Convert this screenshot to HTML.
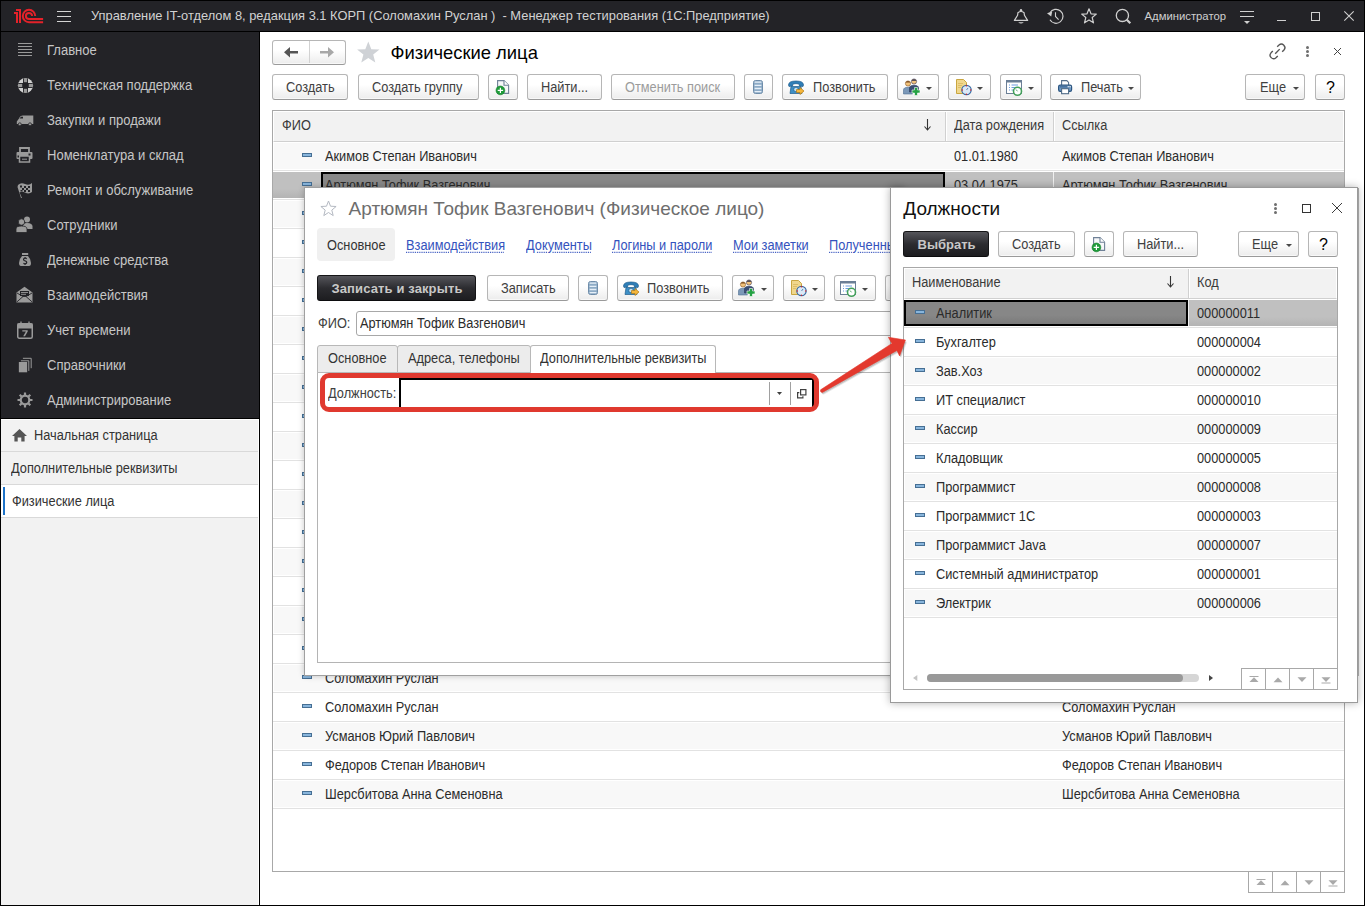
<!DOCTYPE html><html><head><meta charset="utf-8"><style>
*{box-sizing:border-box;margin:0;padding:0}
html,body{width:1365px;height:906px;overflow:hidden}
body{position:relative;font-family:"Liberation Sans",sans-serif;font-size:13px;background:#fff;color:#333}
.a{position:absolute}
.t{position:absolute;white-space:pre}
.btn{position:absolute;height:26px;border:1px solid #b6b6b6;border-bottom-color:#9a9a9a;border-radius:3px;background:linear-gradient(#fff 0%,#fff 40%,#ececec 100%);box-shadow:inset 0 -1px 0 #f8f8f8}
.bdk{position:absolute;height:26px;border:1px solid #151517;border-bottom-color:#0c0c0e;border-radius:3px;background:linear-gradient(#55555a 0%,#2c2c30 50%,#1d1d20 100%)}
.dash{position:absolute;width:10px;height:4px;background:#88b5dc;border:1px solid #466f94}
svg{position:absolute;overflow:visible}
</style></head><body>
<div class="a" style="left:0px;top:0px;width:1365px;height:31px;background:#232327"></div>
<div class="a" style="left:0px;top:31px;width:1365px;height:1px;background:#000"></div>
<svg style="left:0px;top:0px" width="60" height="31" viewBox="0 0 60 31"><g fill="#e4222a"><rect x="16" y="9" width="5" height="2"/><rect x="19" y="9" width="2" height="14"/><rect x="14" y="12" width="4" height="2"/><rect x="16" y="12" width="2" height="11"/></g><g fill="none" stroke="#e4222a" stroke-width="2"><path d="M35.2 16 A6.2 6.2 0 1 0 29 22.2 H43.1"/><path d="M32.1 16 A3.1 3.1 0 1 0 29 19.1 H43.1"/></g></svg>
<div class="a" style="left:57px;top:11px;width:14px;height:1px;background:#d4d4d4"></div>
<div class="a" style="left:57px;top:16px;width:14px;height:1px;background:#d4d4d4"></div>
<div class="a" style="left:57px;top:21px;width:14px;height:1px;background:#d4d4d4"></div>
<div class="t" style="left:91px;top:6.79px;font-size:13.6px;line-height:18px;transform:scaleX(0.9465);transform-origin:0 0;color:#d2d2d2">Управление IT-отделом 8, редакция 3.1 КОРП (Соломахин Руслан )  - Менеджер тестирования (1С:Предприятие)</div>
<svg style="left:1012px;top:7px" width="18" height="19" viewBox="0 0 18 19"><path d="M2.4 13.4 L5.6 8.2 L5.9 5.8 Q9 3.2 12.1 5.8 L12.4 8.2 L15.6 13.4 Z" fill="none" stroke="#d0d0d0" stroke-width="1.2" stroke-linejoin="round"/><circle cx="9" cy="3.2" r="1.2" fill="#d0d0d0"/><path d="M6.2 15.2 H11.8 Q9 18 6.2 15.2Z" fill="#d0d0d0"/></svg>
<svg style="left:1046px;top:8px" width="18" height="18" viewBox="0 0 18 18"><path d="M3.94 11.8 A7 7 0 1 0 3.94 4.8" fill="none" stroke="#d0d0d0" stroke-width="1.2"/><path d="M1 5.2 L6.2 3.4 L5.2 8.4Z" fill="#d0d0d0"/><path d="M9.5 4.3 V8.5 L12.6 11.7" fill="none" stroke="#d0d0d0" stroke-width="1.1"/></svg>
<svg style="left:1080px;top:7px" width="18" height="18" viewBox="0 0 18 18"><path d="M9 1.8 L11 6.8 L16.3 7.1 L12.2 10.5 L13.5 15.8 L9 12.9 L4.5 15.8 L5.8 10.5 L1.7 7.1 L7 6.8 Z" fill="none" stroke="#d0d0d0" stroke-width="1.2" stroke-linejoin="round"/></svg>
<svg style="left:1114px;top:7px" width="19" height="19" viewBox="0 0 19 19"><circle cx="8.4" cy="8.4" r="6.1" fill="none" stroke="#d0d0d0" stroke-width="1.3"/><path d="M12.8 12.8 L16.3 16.3" stroke="#d0d0d0" stroke-width="2.2"/></svg>
<div class="t" style="left:1144.5px;top:8.58px;font-size:11.3px;line-height:15px;color:#cfcfcf">Администратор</div>
<div class="a" style="left:1240px;top:11px;width:14px;height:1px;background:#d0d0d0"></div>
<div class="a" style="left:1240px;top:16px;width:14px;height:1px;background:#d0d0d0"></div>
<svg style="left:1244px;top:21px" width="6" height="3" viewBox="0 0 6 3"><path d="M0 0H6L3 3Z" fill="#d0d0d0"/></svg>
<div class="a" style="left:1277px;top:20px;width:9px;height:1.2px;background:#d0d0d0"></div>
<div class="a" style="left:1311px;top:12px;width:9px;height:9px;border:1.3px solid #d0d0d0"></div>
<svg style="left:1344px;top:11px" width="10" height="10" viewBox="0 0 10 10"><path d="M0.3 0.3L9.7 9.7M9.7 0.3L0.3 9.7" stroke="#d0d0d0" stroke-width="1.1"/></svg>
<div class="a" style="left:0px;top:32px;width:259px;height:386px;background:#232327"></div>
<div class="a" style="left:259px;top:32px;width:1px;height:874px;background:#000"></div>
<div class="a" style="left:0px;top:418px;width:259px;height:1px;background:#000"></div>
<div class="a" style="left:0px;top:419px;width:259px;height:487px;background:#f2f2f2;border-top:1px solid #fff;border-right:1px solid #fff"></div>
<div class="t" style="left:47px;top:41.00px;font-size:14px;line-height:18px;transform:scaleX(0.93);transform-origin:0 0;color:#c6c6c6">Главное</div>
<div class="t" style="left:47px;top:76.00px;font-size:14px;line-height:18px;transform:scaleX(0.93);transform-origin:0 0;color:#c6c6c6">Техническая поддержка</div>
<div class="t" style="left:47px;top:111.00px;font-size:14px;line-height:18px;transform:scaleX(0.93);transform-origin:0 0;color:#c6c6c6">Закупки и продажи</div>
<div class="t" style="left:47px;top:146.00px;font-size:14px;line-height:18px;transform:scaleX(0.93);transform-origin:0 0;color:#c6c6c6">Номенклатура и склад</div>
<div class="t" style="left:47px;top:181.00px;font-size:14px;line-height:18px;transform:scaleX(0.93);transform-origin:0 0;color:#c6c6c6">Ремонт и обслуживание</div>
<div class="t" style="left:47px;top:216.00px;font-size:14px;line-height:18px;transform:scaleX(0.93);transform-origin:0 0;color:#c6c6c6">Сотрудники</div>
<div class="t" style="left:47px;top:251.00px;font-size:14px;line-height:18px;transform:scaleX(0.93);transform-origin:0 0;color:#c6c6c6">Денежные средства</div>
<div class="t" style="left:47px;top:286.00px;font-size:14px;line-height:18px;transform:scaleX(0.93);transform-origin:0 0;color:#c6c6c6">Взаимодействия</div>
<div class="t" style="left:47px;top:321.00px;font-size:14px;line-height:18px;transform:scaleX(0.93);transform-origin:0 0;color:#c6c6c6">Учет времени</div>
<div class="t" style="left:47px;top:356.00px;font-size:14px;line-height:18px;transform:scaleX(0.93);transform-origin:0 0;color:#c6c6c6">Справочники</div>
<div class="t" style="left:47px;top:391.00px;font-size:14px;line-height:18px;transform:scaleX(0.93);transform-origin:0 0;color:#c6c6c6">Администрирование</div>
<div class="a" style="left:18px;top:43px;width:14px;height:1px;background:#9a9a9a"></div>
<div class="a" style="left:18px;top:46px;width:14px;height:1px;background:#9a9a9a"></div>
<div class="a" style="left:18px;top:49px;width:14px;height:1px;background:#9a9a9a"></div>
<div class="a" style="left:18px;top:52px;width:14px;height:1px;background:#9a9a9a"></div>
<div class="a" style="left:18px;top:55px;width:14px;height:1px;background:#9a9a9a"></div>
<svg style="left:17px;top:77px" width="17" height="17" viewBox="0 0 17 17"><clipPath id="lbc"><circle cx="8.5" cy="8.5" r="7.6"/></clipPath><g clip-path="url(#lbc)"><rect width="17" height="17" fill="#d2d2d2"/><rect x="6" y="0" width="5" height="17" fill="#232327"/><rect x="0" y="6" width="17" height="5" fill="#232327"/><rect x="6.9" y="0" width="3.2" height="5.2" fill="#9a9a9a"/><rect x="6.9" y="11.8" width="3.2" height="5.2" fill="#9a9a9a"/><rect x="0" y="6.9" width="5.2" height="3.2" fill="#9a9a9a"/><rect x="11.8" y="6.9" width="5.2" height="3.2" fill="#9a9a9a"/></g></svg>
<svg style="left:16px;top:114px" width="18" height="12" viewBox="0 0 18 12"><path d="M0.8 7.5 L3 4.5 Q4 1.5 7 1.5 H17.3 V10 H0.8Z" fill="#9a9a9a"/><path d="M3.5 4.5 L5 2.8 H7 V4.5Z" fill="#232327"/><circle cx="3.8" cy="10.3" r="1.5" fill="#9a9a9a" stroke="#232327" stroke-width="0.8"/><circle cx="14" cy="10.3" r="1.5" fill="#9a9a9a" stroke="#232327" stroke-width="0.8"/></svg>
<svg style="left:16px;top:147px" width="17" height="16" viewBox="0 0 17 16"><path d="M4 5.5V1H13V5.5" fill="none" stroke="#9a9a9a" stroke-width="1.8"/><rect x="0.5" y="5" width="16" height="7" rx="1" fill="#9a9a9a"/><rect x="3.5" y="9" width="10" height="6" fill="#232327" stroke="#9a9a9a" stroke-width="1.5"/><path d="M6 12.2H11" stroke="#9a9a9a" stroke-width="1"/><rect x="12.5" y="6.5" width="2" height="2" fill="#232327"/><rect x="1.5" y="8.5" width="1.5" height="2" fill="#232327"/></svg>
<svg style="left:17px;top:182px" width="16" height="16" viewBox="0 0 16 16"><path d="M1 3 Q4 0 8 2 Q12 4 15 1 V10 Q12 12.5 8 10.5 Q5 9 2.5 10.5 L5 16 L4 16 L0.5 5Z" fill="#9a9a9a"/><g fill="#232327"><rect x="3" y="3.5" width="2" height="2"/><rect x="7" y="4" width="2" height="2"/><rect x="11" y="4" width="2" height="2"/><rect x="5" y="6" width="2" height="2"/><rect x="9" y="6" width="2" height="2"/><rect x="3.5" y="8" width="2" height="1.5"/><rect x="7" y="8" width="2" height="2"/><rect x="11" y="8" width="2" height="2"/></g></svg>
<svg style="left:16px;top:216px" width="17" height="17" viewBox="0 0 17 17"><circle cx="11" cy="3.5" r="3" fill="#9a9a9a"/><path d="M7 12 V9.5 Q7 7 11 7 Q16.5 7 16.5 10.5 V13 H9Z" fill="#9a9a9a"/><circle cx="5.5" cy="6" r="3.2" fill="#9a9a9a" stroke="#232327" stroke-width="0.8"/><path d="M0 16.5 V13 Q0 10 5.5 10 Q11 10 11 13 V16.5Z" fill="#9a9a9a" stroke="#232327" stroke-width="0.8"/></svg>
<svg style="left:18px;top:252px" width="14" height="15" viewBox="0 0 14 15"><rect x="4" y="1" width="6.2" height="2" fill="#9a9a9a"/><path d="M4 4H10Q13 7 13 11Q13 14 11 14H3Q1 14 1 11Q1 7 4 4Z" fill="#9a9a9a"/><path d="M8.8 6.6Q7.2 5.8 5.9 6.6Q5 7.6 6.3 8.5L7.9 9.3Q9.2 10.2 8.4 11.3Q7.2 12.2 5.4 11.4M7.1 5V5.9M7.1 12.1V13" fill="none" stroke="#232327" stroke-width="1.2"/></svg>
<svg style="left:16px;top:286px" width="17" height="17" viewBox="0 0 17 17"><path d="M0.5 6.5 L8.5 0.8 L16.5 6.5 V16.5 H0.5Z" fill="#9a9a9a"/><rect x="4" y="5" width="9" height="5" fill="#232327"/><path d="M5 6.5H12M5 8.3H10" stroke="#9a9a9a" stroke-width="0.9"/><path d="M1 15.8 L7 10.5 H10 L16 15.8 M1 7 L7 10.5 M16 7 L10 10.5" fill="none" stroke="#232327" stroke-width="0.9"/></svg>
<svg style="left:16px;top:321px" width="18" height="18" viewBox="0 0 18 18"><rect x="1.75" y="2.75" width="14.5" height="14.5" rx="1.5" fill="none" stroke="#9a9a9a" stroke-width="1.5"/><rect x="1.5" y="2.5" width="15" height="5" fill="#9a9a9a"/><path d="M5 0.5V3.5M13 0.5V3.5" stroke="#9a9a9a" stroke-width="1.3"/><path d="M6.3 9.2H11.7V10.5L9 15.2H7.2L9.9 10.5H6.3Z" fill="#9a9a9a"/></svg>
<svg style="left:18px;top:357px" width="14" height="16" viewBox="0 0 14 16"><rect x="0.85" y="5" width="8.3" height="10.3" fill="#9a9a9a"/><path d="M2.9 3.8H10.8V13.9M4.9 1.3H13.2V11.2" fill="none" stroke="#9a9a9a" stroke-width="1"/></svg>
<svg style="left:17px;top:392px" width="16" height="16" viewBox="0 0 16 16"><circle cx="8" cy="8" r="4.3" fill="none" stroke="#9a9a9a" stroke-width="2.2"/><g stroke="#9a9a9a" stroke-width="2.2"><path d="M8 0.5V3.5M8 12.5V15.5M0.5 8H3.5M12.5 8H15.5M2.7 2.7L4.8 4.8M11.2 11.2L13.3 13.3M13.3 2.7L11.2 4.8M4.8 11.2L2.7 13.3"/></g></svg>
<svg style="left:12px;top:429px" width="16" height="13" viewBox="0 0 16 13"><path d="M7.5 0 L15 7 H12.6 V12.5 H9.3 V8.5 H5.7 V12.5 H2.4 V7 H0 Z" fill="#555"/></svg>
<div class="t" style="left:34px;top:426.00px;font-size:14px;line-height:18px;transform:scaleX(0.913);transform-origin:0 0;color:#333">Начальная страница</div>
<div class="a" style="left:1px;top:451px;width:257px;height:1px;background:#d9d9d9"></div>
<div class="t" style="left:11px;top:459.00px;font-size:14px;line-height:18px;transform:scaleX(0.913);transform-origin:0 0;color:#333">Дополнительные реквизиты</div>
<div class="a" style="left:1px;top:484px;width:257px;height:1px;background:#d9d9d9"></div>
<div class="a" style="left:1px;top:485px;width:257px;height:33px;background:#fff"></div>
<div class="a" style="left:3px;top:487px;width:2px;height:28px;background:#1e73c8"></div>
<div class="t" style="left:12px;top:492.00px;font-size:14px;line-height:18px;transform:scaleX(0.913);transform-origin:0 0;color:#333">Физические лица</div>
<div class="a" style="left:1px;top:517px;width:257px;height:1px;background:#d9d9d9"></div>
<div class="btn" style="left:272px;top:40px;width:74px;height:25px"></div>
<div class="a" style="left:309px;top:41px;width:1px;height:22px;background:#d2d2d2"></div>
<svg style="left:284px;top:47px" width="14" height="11" viewBox="0 0 14 11"><path d="M0 5.3 L6 0 V4 H14 V6.6 H6 V10.6Z" fill="#555"/></svg>
<svg style="left:320px;top:47px" width="14" height="11" viewBox="0 0 14 11"><path d="M14 5.3 L8 0 V4 H0 V6.6 H8 V10.6Z" fill="#a8a8a8"/></svg>
<svg style="left:356px;top:41px" width="25" height="22" viewBox="0 0 25 22"><path d="M12.3 0.5 L15.3 8.2 L23.5 8.5 L17.2 13.6 L19.3 21.5 L12.3 17.1 L5.3 21.5 L7.4 13.6 L1.1 8.5 L9.3 8.2 Z" fill="#cfd2d6"/></svg>
<div class="t" style="left:390.5px;top:40.62px;font-size:18.4px;line-height:24px;color:#000">Физические лица</div>
<svg style="left:1269px;top:43px" width="18" height="17" viewBox="0 0 18 17"><g fill="none" stroke="#555" stroke-width="1.35"><path d="M8.2 3.8 L10.03 2.03 A3.5 3.5 0 0 1 14.97 6.97 L13.2 8.8"/><path d="M8.77 12.97 L6.97 14.77 A3.5 3.5 0 0 1 2.03 9.83 L3.83 8.03"/><path d="M6.2 10.7 L10.7 6.1"/></g></svg>
<svg style="left:1306px;top:46.0px" width="3" height="3" viewBox="0 0 3 3"><circle cx="1.5" cy="1.5" r="1.5" fill="#6e6e6e"/></svg>
<svg style="left:1306px;top:50.0px" width="3" height="3" viewBox="0 0 3 3"><circle cx="1.5" cy="1.5" r="1.5" fill="#6e6e6e"/></svg>
<svg style="left:1306px;top:54.0px" width="3" height="3" viewBox="0 0 3 3"><circle cx="1.5" cy="1.5" r="1.5" fill="#6e6e6e"/></svg>
<svg style="left:1334px;top:48px" width="7" height="7" viewBox="0 0 7 7"><path d="M0 0L7 7M7 0L0 7" stroke="#444" stroke-width="1"/></svg>
<div class="btn" style="left:272px;top:74px;width:76px"></div>
<div class="t" style="left:286px;top:78.00px;font-size:14px;line-height:18px;transform:scaleX(0.913);transform-origin:0 0;color:#404040">Создать</div>
<div class="btn" style="left:358px;top:74px;width:121px"></div>
<div class="t" style="left:372px;top:78.00px;font-size:14px;line-height:18px;transform:scaleX(0.913);transform-origin:0 0;color:#404040">Создать группу</div>
<div class="btn" style="left:488px;top:74px;width:30px"></div>
<svg style="left:495px;top:79px" width="16" height="16" viewBox="0 0 16 16"><path d="M2.6 1.6H9L13.6 6.2V14.4H2.6Z" fill="#f6f7f9" stroke="#6f8197" stroke-width="1.1"/><path d="M9 1.6V6.2H13.6" fill="#fff" stroke="#6f8197" stroke-width="1.1"/><circle cx="5.4" cy="11.4" r="4.4" fill="#1e9b39" stroke="#15802c" stroke-width="0.6"/><path d="M5.4 8.7V14.1M2.7 11.4H8.1" stroke="#fff" stroke-width="1.2"/></svg>
<div class="btn" style="left:527px;top:74px;width:75px"></div>
<div class="t" style="left:541px;top:78.00px;font-size:14px;line-height:18px;transform:scaleX(0.913);transform-origin:0 0;color:#404040">Найти...</div>
<div class="btn" style="left:611px;top:74px;width:124px"></div>
<div class="t" style="left:625px;top:78.00px;font-size:14px;line-height:18px;transform:scaleX(0.913);transform-origin:0 0;color:#9c9c9c">Отменить поиск</div>
<div class="btn" style="left:744px;top:74px;width:29px"></div>
<svg style="left:753px;top:80px" width="10" height="14" viewBox="0 0 10 14"><rect x="0.5" y="0.5" width="9" height="13" rx="2" fill="#8dabc6" stroke="#6f8daa"/><path d="M1.6 2.1H8.4M1.6 5.3H8.4M1.6 8.5H8.4M1.6 11.7H8.4" stroke="#e6eff8" stroke-width="1.3"/></svg>
<div class="btn" style="left:782px;top:74px;width:106px"></div>
<svg style="left:788px;top:80px" width="17" height="15" viewBox="0 0 17 15"><path d="M0.5 5 Q0.5 1 8 1 Q15.5 1 15.5 5 L15 6.5 L11.5 6 L11 4 Q8 3.3 5 4 L4.5 6 L1 6.5Z" fill="#2f7fb8" stroke="#1f5d8c" stroke-width="0.7"/><path d="M3 6.5 L13 6.5 L14 13.5 H2Z" fill="#3d8fc6" stroke="#1f5d8c" stroke-width="0.7"/><circle cx="8" cy="9.5" r="2.3" fill="#bfe0f4" stroke="#1f5d8c" stroke-width="0.7"/><path d="M8.5 9.5 H12 V7.5 L16 11 L12 14.5 V12.5 H8.5Z" fill="#f6b73c" stroke="#b57b12" stroke-width="0.7"/></svg>
<div class="t" style="left:813px;top:78.00px;font-size:14px;line-height:18px;transform:scaleX(0.913);transform-origin:0 0;color:#404040">Позвонить</div>
<div class="btn" style="left:897px;top:74px;width:42px"></div>
<svg style="left:903px;top:78px" width="18" height="17" viewBox="0 0 18 17"><circle cx="5" cy="5.5" r="2.6" fill="#f2c27a" stroke="#8a5a2a" stroke-width="0.6"/><path d="M2.3 4.5 Q5 1.5 7.7 4.5" fill="#7a4a20"/><path d="M0.5 16 V12 Q0.5 9.3 5 9.3 Q9.5 9.3 9.5 12 V16Z" fill="#7b98b8" stroke="#4f6f92" stroke-width="0.6"/><circle cx="11" cy="3.5" r="2.6" fill="#f2c27a" stroke="#3a3a5a" stroke-width="0.6"/><path d="M8.3 2.8 Q11 -0.5 13.7 2.8" fill="#2a2a4a"/><path d="M6.5 14 V10 Q6.5 7.3 11 7.3 Q15.5 7.3 15.5 10 V14Z" fill="#3a4e74" stroke="#2a3a5a" stroke-width="0.6"/><path d="M11.5 9.5H14.5V12H17V15H14.5V17.5H11.5V15H9V12H11.5Z" fill="#25a244" stroke="#fff" stroke-width="0.6"/></svg>
<svg style="left:926px;top:87px" width="6" height="3" viewBox="0 0 6 3"><path d="M0 0H6L3 3Z" fill="#474747"/></svg>
<div class="btn" style="left:948px;top:74px;width:43px"></div>
<svg style="left:956px;top:79px" width="16" height="16" viewBox="0 0 16 16"><path d="M0.5 0.5H7.5L10.5 3.5V14.5H0.5Z" fill="#f0d78c" stroke="#c9a640"/><path d="M2 4.5H7M2 6.5H6M2 8.5H5" stroke="#d8b860" stroke-width="0.8"/><circle cx="10.5" cy="11" r="4.7" fill="#dce9f6" stroke="#3a6ea6" stroke-width="1.2"/><path d="M10.5 11 L12 9" stroke="#3a6ea6" stroke-width="0.8"/><circle cx="10.5" cy="6.8" r="0.7" fill="#e02020"/><circle cx="14.7" cy="11" r="0.7" fill="#e02020"/><circle cx="6.3" cy="11" r="0.7" fill="#e02020"/><circle cx="10.5" cy="15.2" r="0.7" fill="#e02020"/></svg>
<svg style="left:977px;top:87px" width="6" height="3" viewBox="0 0 6 3"><path d="M0 0H6L3 3Z" fill="#474747"/></svg>
<div class="btn" style="left:1000px;top:74px;width:42px"></div>
<svg style="left:1006px;top:80px" width="17" height="16" viewBox="0 0 17 16"><rect x="0.5" y="0.5" width="15" height="13" fill="#fff" stroke="#6b7f96"/><rect x="0.5" y="0.5" width="15" height="2" fill="#6b7f96"/><path d="M3 5H4M5.5 5H12M3 7.5H4M5.5 7.5H10M3 10H4M5.5 10H8" stroke="#6a9ce0" stroke-width="1"/><circle cx="11.5" cy="11.3" r="4" fill="#fff" stroke="#43a05a" stroke-width="1.6"/><path d="M11.5 11.3 L10 9.5" stroke="#43a05a" stroke-width="0.9"/></svg>
<svg style="left:1028px;top:87px" width="6" height="3" viewBox="0 0 6 3"><path d="M0 0H6L3 3Z" fill="#474747"/></svg>
<div class="btn" style="left:1050px;top:74px;width:91px"></div>
<svg style="left:1058px;top:80px" width="15" height="15" viewBox="0 0 15 15"><path d="M3.6 5.2V0.6H8.8L10.6 2.4V5.2" fill="#fff" stroke="#56708b" stroke-width="1.1"/><rect x="0.6" y="5.2" width="13" height="6.2" rx="1.6" fill="#6d99c5" stroke="#2b5580" stroke-width="1.2"/><path d="M2 6.9H12" stroke="#2b5580" stroke-width="0.9"/><rect x="9.6" y="6.1" width="1.2" height="1.2" fill="#fff"/><rect x="11.4" y="6.1" width="1.2" height="1.2" fill="#fff"/><rect x="3.6" y="8.7" width="7" height="5" fill="#fff" stroke="#4e6a86" stroke-width="1.1"/></svg>
<div class="t" style="left:1081px;top:78.00px;font-size:14px;line-height:18px;transform:scaleX(0.913);transform-origin:0 0;color:#404040">Печать</div>
<svg style="left:1128px;top:87px" width="6" height="3" viewBox="0 0 6 3"><path d="M0 0H6L3 3Z" fill="#474747"/></svg>
<div class="btn" style="left:1245px;top:74px;width:60px"></div>
<div class="t" style="left:1260px;top:78.00px;font-size:14px;line-height:18px;transform:scaleX(0.913);transform-origin:0 0;color:#404040">Еще</div>
<svg style="left:1293px;top:87px" width="6" height="3" viewBox="0 0 6 3"><path d="M0 0H6L3 3Z" fill="#474747"/></svg>
<div class="btn" style="left:1315px;top:74px;width:30px"></div>
<div class="t" style="left:1326px;top:76.96px;font-size:16px;line-height:21px;color:#000">?</div>
<div class="a" style="left:272px;top:110px;width:1073px;height:762px;border:1px solid #a8a8a8;background:#fff"></div>
<div class="a" style="left:273px;top:111px;width:1071px;height:31px;background:#f2f2f2;border:1px solid #fff;border-bottom:1px solid #d0d0d0"></div>
<div class="a" style="left:945px;top:112px;width:1px;height:29px;background:#d0d0d0"></div>
<div class="a" style="left:946px;top:112px;width:1px;height:29px;background:#fff"></div>
<div class="a" style="left:1053px;top:112px;width:1px;height:29px;background:#d0d0d0"></div>
<div class="a" style="left:1054px;top:112px;width:1px;height:29px;background:#fff"></div>
<div class="t" style="left:282px;top:116.00px;font-size:14px;line-height:18px;transform:scaleX(0.913);transform-origin:0 0;color:#3a3a3a">ФИО</div>
<div class="t" style="left:954px;top:116.00px;font-size:14px;line-height:18px;transform:scaleX(0.913);transform-origin:0 0;color:#3a3a3a">Дата рождения</div>
<div class="t" style="left:1062px;top:116.00px;font-size:14px;line-height:18px;transform:scaleX(0.913);transform-origin:0 0;color:#3a3a3a">Ссылка</div>
<svg style="left:924px;top:119px" width="7" height="12" viewBox="0 0 7 12"><path d="M3.5 0V10.5" stroke="#333" stroke-width="1.1"/><path d="M0.5 7.5L3.5 11L6.5 7.5" fill="none" stroke="#333" stroke-width="1.1"/></svg>
<div class="a" style="left:273px;top:142px;width:1071px;height:28px;background:#f8f8f8;border-top:1px solid #fff;border-bottom:1px solid #fff;border-left:1px solid #fff"></div>
<div class="a" style="left:273px;top:170px;width:1071px;height:1px;background:#e2e2e2"></div>
<div class="dash" style="left:302px;top:153px"></div>
<div class="t" style="left:325px;top:147.00px;font-size:14px;line-height:18px;transform:scaleX(0.913);transform-origin:0 0;color:#2b2b2b">Акимов Степан Иванович</div>
<div class="t" style="left:1062px;top:147.00px;font-size:14px;line-height:18px;transform:scaleX(0.913);transform-origin:0 0;color:#2b2b2b">Акимов Степан Иванович</div>
<div class="t" style="left:954px;top:147.00px;font-size:14px;line-height:18px;transform:scaleX(0.913);transform-origin:0 0;color:#2b2b2b">01.01.1980</div>
<div class="a" style="left:273px;top:171px;width:1071px;height:28px;background:linear-gradient(#c0c0c0 65%,#b4b4b4);border-top:1px solid #fff;border-bottom:1px solid #fff"></div>
<div class="a" style="left:273px;top:199px;width:1071px;height:1px;background:#e2e2e2"></div>
<div class="a" style="left:321px;top:172px;width:624px;height:26px;background:linear-gradient(#878787 60%,#7a7a7a);border:2px solid #000"></div>
<div class="a" style="left:1053px;top:172px;width:1px;height:26px;background:#f0f0f0"></div>
<div class="dash" style="left:302px;top:182px"></div>
<div class="t" style="left:325px;top:176.00px;font-size:14px;line-height:18px;transform:scaleX(0.913);transform-origin:0 0;color:#2b2b2b">Артюмян Тофик Вазгенович</div>
<div class="t" style="left:1062px;top:176.00px;font-size:14px;line-height:18px;transform:scaleX(0.913);transform-origin:0 0;color:#2b2b2b">Артюмян Тофик Вазгенович</div>
<div class="t" style="left:954px;top:176.00px;font-size:14px;line-height:18px;transform:scaleX(0.913);transform-origin:0 0;color:#2b2b2b">03.04.1975</div>
<div class="a" style="left:273px;top:200px;width:1071px;height:28px;background:#f8f8f8;border-top:1px solid #fff;border-bottom:1px solid #fff;border-left:1px solid #fff"></div>
<div class="a" style="left:273px;top:228px;width:1071px;height:1px;background:#e2e2e2"></div>
<div class="dash" style="left:302px;top:211px"></div>
<div class="a" style="left:273px;top:229px;width:1071px;height:28px;background:#fff;border-top:1px solid #fff;border-bottom:1px solid #fff;border-left:1px solid #fff"></div>
<div class="a" style="left:273px;top:257px;width:1071px;height:1px;background:#e2e2e2"></div>
<div class="dash" style="left:302px;top:240px"></div>
<div class="a" style="left:273px;top:258px;width:1071px;height:28px;background:#f8f8f8;border-top:1px solid #fff;border-bottom:1px solid #fff;border-left:1px solid #fff"></div>
<div class="a" style="left:273px;top:286px;width:1071px;height:1px;background:#e2e2e2"></div>
<div class="dash" style="left:302px;top:269px"></div>
<div class="a" style="left:273px;top:287px;width:1071px;height:28px;background:#fff;border-top:1px solid #fff;border-bottom:1px solid #fff;border-left:1px solid #fff"></div>
<div class="a" style="left:273px;top:315px;width:1071px;height:1px;background:#e2e2e2"></div>
<div class="dash" style="left:302px;top:298px"></div>
<div class="a" style="left:273px;top:316px;width:1071px;height:28px;background:#f8f8f8;border-top:1px solid #fff;border-bottom:1px solid #fff;border-left:1px solid #fff"></div>
<div class="a" style="left:273px;top:344px;width:1071px;height:1px;background:#e2e2e2"></div>
<div class="dash" style="left:302px;top:327px"></div>
<div class="a" style="left:273px;top:345px;width:1071px;height:28px;background:#fff;border-top:1px solid #fff;border-bottom:1px solid #fff;border-left:1px solid #fff"></div>
<div class="a" style="left:273px;top:373px;width:1071px;height:1px;background:#e2e2e2"></div>
<div class="dash" style="left:302px;top:356px"></div>
<div class="a" style="left:273px;top:374px;width:1071px;height:28px;background:#f8f8f8;border-top:1px solid #fff;border-bottom:1px solid #fff;border-left:1px solid #fff"></div>
<div class="a" style="left:273px;top:402px;width:1071px;height:1px;background:#e2e2e2"></div>
<div class="dash" style="left:302px;top:385px"></div>
<div class="a" style="left:273px;top:403px;width:1071px;height:28px;background:#fff;border-top:1px solid #fff;border-bottom:1px solid #fff;border-left:1px solid #fff"></div>
<div class="a" style="left:273px;top:431px;width:1071px;height:1px;background:#e2e2e2"></div>
<div class="dash" style="left:302px;top:414px"></div>
<div class="a" style="left:273px;top:432px;width:1071px;height:28px;background:#f8f8f8;border-top:1px solid #fff;border-bottom:1px solid #fff;border-left:1px solid #fff"></div>
<div class="a" style="left:273px;top:460px;width:1071px;height:1px;background:#e2e2e2"></div>
<div class="dash" style="left:302px;top:443px"></div>
<div class="a" style="left:273px;top:461px;width:1071px;height:28px;background:#fff;border-top:1px solid #fff;border-bottom:1px solid #fff;border-left:1px solid #fff"></div>
<div class="a" style="left:273px;top:489px;width:1071px;height:1px;background:#e2e2e2"></div>
<div class="dash" style="left:302px;top:472px"></div>
<div class="a" style="left:273px;top:490px;width:1071px;height:28px;background:#f8f8f8;border-top:1px solid #fff;border-bottom:1px solid #fff;border-left:1px solid #fff"></div>
<div class="a" style="left:273px;top:518px;width:1071px;height:1px;background:#e2e2e2"></div>
<div class="dash" style="left:302px;top:501px"></div>
<div class="a" style="left:273px;top:519px;width:1071px;height:28px;background:#fff;border-top:1px solid #fff;border-bottom:1px solid #fff;border-left:1px solid #fff"></div>
<div class="a" style="left:273px;top:547px;width:1071px;height:1px;background:#e2e2e2"></div>
<div class="dash" style="left:302px;top:530px"></div>
<div class="a" style="left:273px;top:548px;width:1071px;height:28px;background:#f8f8f8;border-top:1px solid #fff;border-bottom:1px solid #fff;border-left:1px solid #fff"></div>
<div class="a" style="left:273px;top:576px;width:1071px;height:1px;background:#e2e2e2"></div>
<div class="dash" style="left:302px;top:559px"></div>
<div class="a" style="left:273px;top:577px;width:1071px;height:28px;background:#fff;border-top:1px solid #fff;border-bottom:1px solid #fff;border-left:1px solid #fff"></div>
<div class="a" style="left:273px;top:605px;width:1071px;height:1px;background:#e2e2e2"></div>
<div class="dash" style="left:302px;top:588px"></div>
<div class="a" style="left:273px;top:606px;width:1071px;height:28px;background:#f8f8f8;border-top:1px solid #fff;border-bottom:1px solid #fff;border-left:1px solid #fff"></div>
<div class="a" style="left:273px;top:634px;width:1071px;height:1px;background:#e2e2e2"></div>
<div class="dash" style="left:302px;top:617px"></div>
<div class="a" style="left:273px;top:635px;width:1071px;height:28px;background:#fff;border-top:1px solid #fff;border-bottom:1px solid #fff;border-left:1px solid #fff"></div>
<div class="a" style="left:273px;top:663px;width:1071px;height:1px;background:#e2e2e2"></div>
<div class="dash" style="left:302px;top:646px"></div>
<div class="a" style="left:273px;top:664px;width:1071px;height:28px;background:#f8f8f8;border-top:1px solid #fff;border-bottom:1px solid #fff;border-left:1px solid #fff"></div>
<div class="a" style="left:273px;top:692px;width:1071px;height:1px;background:#e2e2e2"></div>
<div class="dash" style="left:302px;top:675px"></div>
<div class="t" style="left:325px;top:669.00px;font-size:14px;line-height:18px;transform:scaleX(0.913);transform-origin:0 0;color:#2b2b2b">Соломахин Руслан</div>
<div class="t" style="left:1062px;top:669.00px;font-size:14px;line-height:18px;transform:scaleX(0.913);transform-origin:0 0;color:#2b2b2b">Соломахин Руслан</div>
<div class="a" style="left:273px;top:693px;width:1071px;height:28px;background:#fff;border-top:1px solid #fff;border-bottom:1px solid #fff;border-left:1px solid #fff"></div>
<div class="a" style="left:273px;top:721px;width:1071px;height:1px;background:#e2e2e2"></div>
<div class="dash" style="left:302px;top:704px"></div>
<div class="t" style="left:325px;top:698.00px;font-size:14px;line-height:18px;transform:scaleX(0.913);transform-origin:0 0;color:#2b2b2b">Соломахин Руслан</div>
<div class="t" style="left:1062px;top:698.00px;font-size:14px;line-height:18px;transform:scaleX(0.913);transform-origin:0 0;color:#2b2b2b">Соломахин Руслан</div>
<div class="a" style="left:273px;top:722px;width:1071px;height:28px;background:#f8f8f8;border-top:1px solid #fff;border-bottom:1px solid #fff;border-left:1px solid #fff"></div>
<div class="a" style="left:273px;top:750px;width:1071px;height:1px;background:#e2e2e2"></div>
<div class="dash" style="left:302px;top:733px"></div>
<div class="t" style="left:325px;top:727.00px;font-size:14px;line-height:18px;transform:scaleX(0.913);transform-origin:0 0;color:#2b2b2b">Усманов Юрий Павлович</div>
<div class="t" style="left:1062px;top:727.00px;font-size:14px;line-height:18px;transform:scaleX(0.913);transform-origin:0 0;color:#2b2b2b">Усманов Юрий Павлович</div>
<div class="a" style="left:273px;top:751px;width:1071px;height:28px;background:#fff;border-top:1px solid #fff;border-bottom:1px solid #fff;border-left:1px solid #fff"></div>
<div class="a" style="left:273px;top:779px;width:1071px;height:1px;background:#e2e2e2"></div>
<div class="dash" style="left:302px;top:762px"></div>
<div class="t" style="left:325px;top:756.00px;font-size:14px;line-height:18px;transform:scaleX(0.913);transform-origin:0 0;color:#2b2b2b">Федоров Степан Иванович</div>
<div class="t" style="left:1062px;top:756.00px;font-size:14px;line-height:18px;transform:scaleX(0.913);transform-origin:0 0;color:#2b2b2b">Федоров Степан Иванович</div>
<div class="a" style="left:273px;top:780px;width:1071px;height:28px;background:#f8f8f8;border-top:1px solid #fff;border-bottom:1px solid #fff;border-left:1px solid #fff"></div>
<div class="a" style="left:273px;top:808px;width:1071px;height:1px;background:#e2e2e2"></div>
<div class="dash" style="left:302px;top:791px"></div>
<div class="t" style="left:325px;top:785.00px;font-size:14px;line-height:18px;transform:scaleX(0.913);transform-origin:0 0;color:#2b2b2b">Шерсбитова Анна Семеновна</div>
<div class="t" style="left:1062px;top:785.00px;font-size:14px;line-height:18px;transform:scaleX(0.913);transform-origin:0 0;color:#2b2b2b">Шерсбитова Анна Семеновна</div>
<div class="a" style="left:1248px;top:871px;width:97px;height:22px;border:1px solid #a8a8a8;background:#fff"></div>
<div class="a" style="left:1272px;top:871px;width:1px;height:22px;background:#a8a8a8"></div>
<div class="a" style="left:1296px;top:871px;width:1px;height:22px;background:#a8a8a8"></div>
<div class="a" style="left:1320px;top:871px;width:1px;height:22px;background:#a8a8a8"></div>
<svg style="left:1255.5px;top:879px" width="10" height="7" viewBox="0 0 10 7"><path d="M0.5 0.5H9.5" stroke="#a9a9a9" stroke-width="1"/><path d="M5 1.2L9.5 6H0.5Z" fill="#a9a9a9"/></svg>
<svg style="left:1279.5px;top:880px" width="10" height="6" viewBox="0 0 10 6"><path d="M5 0.5L9.5 5.2H0.5Z" fill="#a9a9a9"/></svg>
<svg style="left:1303.5px;top:880px" width="10" height="6" viewBox="0 0 10 6"><path d="M0.5 0.3H9.5L5 5Z" fill="#a9a9a9"/></svg>
<svg style="left:1327.5px;top:880px" width="10" height="7" viewBox="0 0 10 7"><path d="M0.5 0.3H9.5L5 5Z" fill="#a9a9a9"/><path d="M0.5 6H9.5" stroke="#a9a9a9" stroke-width="1"/></svg>
<div class="a" style="left:304px;top:187px;width:600px;height:489px;background:#fff;border:1px solid #a0a0a0;box-shadow:0 0 6px rgba(0,0,0,0.22)"></div>
<svg style="left:320px;top:200px" width="18" height="17" viewBox="0 0 18 17"><path d="M8.5 1 L10.5 6.2 L16.1 6.5 L11.8 10.1 L13.2 15.6 L8.5 12.5 L3.8 15.6 L5.2 10.1 L0.9 6.5 L6.5 6.2 Z" fill="none" stroke="#b4b9c2" stroke-width="1"/></svg>
<div class="t" style="left:348.6px;top:196.12px;font-size:19px;line-height:25px;color:#6e6e6e">Артюмян Тофик Вазгенович (Физическое лицо)</div>
<div class="a" style="left:317px;top:228px;width:78px;height:33px;background:#f0f0f0;border-radius:4px"></div>
<div class="t" style="left:327px;top:236.00px;font-size:14px;line-height:18px;transform:scaleX(0.913);transform-origin:0 0;color:#333">Основное</div>
<div class="t" style="left:406px;top:236.00px;font-size:14px;line-height:18px;transform:scaleX(0.913);transform-origin:0 0;color:#3452bd;text-decoration:underline dotted #3452bd;text-underline-offset:2px">Взаимодействия</div>
<div class="t" style="left:526px;top:236.00px;font-size:14px;line-height:18px;transform:scaleX(0.913);transform-origin:0 0;color:#3452bd;text-decoration:underline dotted #3452bd;text-underline-offset:2px">Документы</div>
<div class="t" style="left:612px;top:236.00px;font-size:14px;line-height:18px;transform:scaleX(0.913);transform-origin:0 0;color:#3452bd;text-decoration:underline dotted #3452bd;text-underline-offset:2px">Логины и пароли</div>
<div class="t" style="left:733px;top:236.00px;font-size:14px;line-height:18px;transform:scaleX(0.913);transform-origin:0 0;color:#3452bd;text-decoration:underline dotted #3452bd;text-underline-offset:2px">Мои заметки</div>
<div class="t" style="left:829px;top:236.00px;font-size:14px;line-height:18px;transform:scaleX(0.913);transform-origin:0 0;color:#3452bd;text-decoration:underline dotted #3452bd;text-underline-offset:2px">Полученные</div>
<div class="bdk" style="left:317px;top:275px;width:159px"></div>
<div class="t" style="left:331.5px;top:280.10px;font-size:13px;line-height:17px;font-weight:bold;color:#c8c8c8;letter-spacing:0.12px">Записать и закрыть</div>
<div class="btn" style="left:487px;top:275px;width:82px"></div>
<div class="t" style="left:501px;top:279.00px;font-size:14px;line-height:18px;transform:scaleX(0.913);transform-origin:0 0;color:#404040">Записать</div>
<div class="btn" style="left:578px;top:275px;width:30px"></div>
<svg style="left:588px;top:281px" width="10" height="14" viewBox="0 0 10 14"><rect x="0.5" y="0.5" width="9" height="13" rx="2" fill="#8dabc6" stroke="#6f8daa"/><path d="M1.6 2.1H8.4M1.6 5.3H8.4M1.6 8.5H8.4M1.6 11.7H8.4" stroke="#e6eff8" stroke-width="1.3"/></svg>
<div class="btn" style="left:617px;top:275px;width:106px"></div>
<svg style="left:623px;top:281px" width="17" height="15" viewBox="0 0 17 15"><path d="M0.5 5 Q0.5 1 8 1 Q15.5 1 15.5 5 L15 6.5 L11.5 6 L11 4 Q8 3.3 5 4 L4.5 6 L1 6.5Z" fill="#2f7fb8" stroke="#1f5d8c" stroke-width="0.7"/><path d="M3 6.5 L13 6.5 L14 13.5 H2Z" fill="#3d8fc6" stroke="#1f5d8c" stroke-width="0.7"/><circle cx="8" cy="9.5" r="2.3" fill="#bfe0f4" stroke="#1f5d8c" stroke-width="0.7"/><path d="M8.5 9.5 H12 V7.5 L16 11 L12 14.5 V12.5 H8.5Z" fill="#f6b73c" stroke="#b57b12" stroke-width="0.7"/></svg>
<div class="t" style="left:647px;top:279.00px;font-size:14px;line-height:18px;transform:scaleX(0.913);transform-origin:0 0;color:#404040">Позвонить</div>
<div class="btn" style="left:732px;top:275px;width:42px"></div>
<svg style="left:738px;top:279px" width="18" height="17" viewBox="0 0 18 17"><circle cx="5" cy="5.5" r="2.6" fill="#f2c27a" stroke="#8a5a2a" stroke-width="0.6"/><path d="M2.3 4.5 Q5 1.5 7.7 4.5" fill="#7a4a20"/><path d="M0.5 16 V12 Q0.5 9.3 5 9.3 Q9.5 9.3 9.5 12 V16Z" fill="#7b98b8" stroke="#4f6f92" stroke-width="0.6"/><circle cx="11" cy="3.5" r="2.6" fill="#f2c27a" stroke="#3a3a5a" stroke-width="0.6"/><path d="M8.3 2.8 Q11 -0.5 13.7 2.8" fill="#2a2a4a"/><path d="M6.5 14 V10 Q6.5 7.3 11 7.3 Q15.5 7.3 15.5 10 V14Z" fill="#3a4e74" stroke="#2a3a5a" stroke-width="0.6"/><path d="M11.5 9.5H14.5V12H17V15H14.5V17.5H11.5V15H9V12H11.5Z" fill="#25a244" stroke="#fff" stroke-width="0.6"/></svg>
<svg style="left:761px;top:288px" width="6" height="3" viewBox="0 0 6 3"><path d="M0 0H6L3 3Z" fill="#474747"/></svg>
<div class="btn" style="left:783px;top:275px;width:42px"></div>
<svg style="left:791px;top:280px" width="16" height="16" viewBox="0 0 16 16"><path d="M0.5 0.5H7.5L10.5 3.5V14.5H0.5Z" fill="#f0d78c" stroke="#c9a640"/><path d="M2 4.5H7M2 6.5H6M2 8.5H5" stroke="#d8b860" stroke-width="0.8"/><circle cx="10.5" cy="11" r="4.7" fill="#dce9f6" stroke="#3a6ea6" stroke-width="1.2"/><path d="M10.5 11 L12 9" stroke="#3a6ea6" stroke-width="0.8"/><circle cx="10.5" cy="6.8" r="0.7" fill="#e02020"/><circle cx="14.7" cy="11" r="0.7" fill="#e02020"/><circle cx="6.3" cy="11" r="0.7" fill="#e02020"/><circle cx="10.5" cy="15.2" r="0.7" fill="#e02020"/></svg>
<svg style="left:812px;top:288px" width="6" height="3" viewBox="0 0 6 3"><path d="M0 0H6L3 3Z" fill="#474747"/></svg>
<div class="btn" style="left:834px;top:275px;width:42px"></div>
<svg style="left:840px;top:281px" width="17" height="16" viewBox="0 0 17 16"><rect x="0.5" y="0.5" width="15" height="13" fill="#fff" stroke="#6b7f96"/><rect x="0.5" y="0.5" width="15" height="2" fill="#6b7f96"/><path d="M3 5H4M5.5 5H12M3 7.5H4M5.5 7.5H10M3 10H4M5.5 10H8" stroke="#6a9ce0" stroke-width="1"/><circle cx="11.5" cy="11.3" r="4" fill="#fff" stroke="#43a05a" stroke-width="1.6"/><path d="M11.5 11.3 L10 9.5" stroke="#43a05a" stroke-width="0.9"/></svg>
<svg style="left:862px;top:288px" width="6" height="3" viewBox="0 0 6 3"><path d="M0 0H6L3 3Z" fill="#474747"/></svg>
<div class="btn" style="left:885px;top:275px;width:42px"></div>
<div class="t" style="left:318px;top:314.00px;font-size:14px;line-height:18px;transform:scaleX(0.913);transform-origin:0 0;color:#404040">ФИО:</div>
<div class="a" style="left:356px;top:311px;width:600px;height:25px;border:1px solid #a8a8a8;border-radius:3px;background:#fff"></div>
<div class="t" style="left:360px;top:314.00px;font-size:14px;line-height:18px;transform:scaleX(0.913);transform-origin:0 0;color:#2b2b2b">Артюмян Тофик Вазгенович</div>
<div class="a" style="left:317px;top:372px;width:600px;height:291px;border:1px solid #b4b4b4;background:#fff"></div>
<div class="a" style="left:317px;top:345px;width:81px;height:28px;background:#ececec;border:1px solid #b8b8b8;border-radius:3px 3px 0 0"></div>
<div class="a" style="left:397px;top:345px;width:134px;height:28px;background:#ececec;border:1px solid #b8b8b8;border-radius:3px 3px 0 0"></div>
<div class="a" style="left:530px;top:345px;width:186px;height:28px;background:#fff;border:1px solid #b8b8b8;border-bottom:none;border-radius:3px 3px 0 0"></div>
<div class="t" style="left:328px;top:349.00px;font-size:14px;line-height:18px;transform:scaleX(0.913);transform-origin:0 0;color:#333">Основное</div>
<div class="t" style="left:408px;top:349.00px;font-size:14px;line-height:18px;transform:scaleX(0.913);transform-origin:0 0;color:#333">Адреса, телефоны</div>
<div class="t" style="left:540px;top:349.00px;font-size:14px;line-height:18px;transform:scaleX(0.913);transform-origin:0 0;color:#333">Дополнительные реквизиты</div>
<div class="t" style="left:328px;top:384.00px;font-size:14px;line-height:18px;transform:scaleX(0.913);transform-origin:0 0;color:#404040">Должность:</div>
<div class="a" style="left:399px;top:378px;width:415px;height:31px;border:2px solid #000;background:#fff"></div>
<div class="a" style="left:769px;top:382px;width:1px;height:23px;background:#a0a0a0"></div>
<div class="a" style="left:790px;top:382px;width:1px;height:23px;background:#a0a0a0"></div>
<svg style="left:777px;top:392px" width="5" height="3" viewBox="0 0 5 3"><path d="M0 0H5L2.5 3Z" fill="#404040"/></svg>
<svg style="left:797px;top:389px" width="10" height="10" viewBox="0 0 10 10"><rect x="3.6" y="0.6" width="5.3" height="5.3" fill="none" stroke="#404040" stroke-width="1.2"/><path d="M2.3 3.6 H0.6 V8.9 H5.9 V7.2" fill="none" stroke="#404040" stroke-width="1.2"/></svg>
<div class="a" style="left:320px;top:373px;width:499px;height:39px;border:5px solid #e0392f;border-radius:9px"></div>
<div class="a" style="left:890px;top:187px;width:468px;height:516px;background:#fff;border:1px solid #9a9a9a;box-shadow:0 0 8px rgba(0,0,0,0.3)"></div>
<div class="a" style="left:1358px;top:188px;width:1px;height:488px;background:#a0a0a0"></div>
<div class="t" style="left:903.3px;top:195.72px;font-size:19px;line-height:25px;color:#111">Должности</div>
<svg style="left:1274px;top:203.0px" width="3" height="3" viewBox="0 0 3 3"><circle cx="1.5" cy="1.5" r="1.5" fill="#6e6e6e"/></svg>
<svg style="left:1274px;top:207.0px" width="3" height="3" viewBox="0 0 3 3"><circle cx="1.5" cy="1.5" r="1.5" fill="#6e6e6e"/></svg>
<svg style="left:1274px;top:211.0px" width="3" height="3" viewBox="0 0 3 3"><circle cx="1.5" cy="1.5" r="1.5" fill="#6e6e6e"/></svg>
<div class="a" style="left:1302px;top:204px;width:9px;height:9px;border:1.2px solid #333"></div>
<svg style="left:1332px;top:203px" width="10" height="10" viewBox="0 0 10 10"><path d="M0 0L10 10M10 0L0 10" stroke="#333" stroke-width="0.95"/></svg>
<div class="bdk" style="left:903px;top:231px;width:86px"></div>
<div class="t" style="left:917.5px;top:235.70px;font-size:13px;line-height:17px;font-weight:bold;color:#c8c8c8">Выбрать</div>
<div class="btn" style="left:998px;top:231px;width:77px"></div>
<div class="t" style="left:1012px;top:235.00px;font-size:14px;line-height:18px;transform:scaleX(0.913);transform-origin:0 0;color:#404040">Создать</div>
<div class="btn" style="left:1084px;top:231px;width:30px"></div>
<svg style="left:1091px;top:236px" width="16" height="16" viewBox="0 0 16 16"><path d="M2.6 1.6H9L13.6 6.2V14.4H2.6Z" fill="#f6f7f9" stroke="#6f8197" stroke-width="1.1"/><path d="M9 1.6V6.2H13.6" fill="#fff" stroke="#6f8197" stroke-width="1.1"/><circle cx="5.4" cy="11.4" r="4.4" fill="#1e9b39" stroke="#15802c" stroke-width="0.6"/><path d="M5.4 8.7V14.1M2.7 11.4H8.1" stroke="#fff" stroke-width="1.2"/></svg>
<div class="btn" style="left:1123px;top:231px;width:75px"></div>
<div class="t" style="left:1137px;top:235.00px;font-size:14px;line-height:18px;transform:scaleX(0.913);transform-origin:0 0;color:#404040">Найти...</div>
<div class="btn" style="left:1238px;top:231px;width:61px"></div>
<div class="t" style="left:1252px;top:235.00px;font-size:14px;line-height:18px;transform:scaleX(0.913);transform-origin:0 0;color:#404040">Еще</div>
<svg style="left:1286px;top:244px" width="6" height="3" viewBox="0 0 6 3"><path d="M0 0H6L3 3Z" fill="#474747"/></svg>
<div class="btn" style="left:1308px;top:231px;width:30px"></div>
<div class="t" style="left:1319px;top:233.96px;font-size:16px;line-height:21px;color:#000">?</div>
<div class="a" style="left:903px;top:267px;width:435px;height:423px;border:1px solid #a8a8a8;background:#fff"></div>
<div class="a" style="left:904px;top:268px;width:433px;height:31px;background:#f2f2f2;border:1px solid #fff;border-bottom:1px solid #d0d0d0"></div>
<div class="a" style="left:1188px;top:269px;width:1px;height:29px;background:#d0d0d0"></div>
<div class="a" style="left:1189px;top:269px;width:1px;height:29px;background:#fff"></div>
<div class="t" style="left:912px;top:273.00px;font-size:14px;line-height:18px;transform:scaleX(0.913);transform-origin:0 0;color:#3a3a3a">Наименование</div>
<div class="t" style="left:1197px;top:273.00px;font-size:14px;line-height:18px;transform:scaleX(0.913);transform-origin:0 0;color:#3a3a3a">Код</div>
<svg style="left:1167px;top:276px" width="7" height="12" viewBox="0 0 7 12"><path d="M3.5 0V10.5" stroke="#333" stroke-width="1.1"/><path d="M0.5 7.5L3.5 11L6.5 7.5" fill="none" stroke="#333" stroke-width="1.1"/></svg>
<div class="a" style="left:904px;top:299px;width:433px;height:28px;background:linear-gradient(#c0c0c0 65%,#b4b4b4);border-top:1px solid #fff;border-bottom:1px solid #fff"></div>
<div class="a" style="left:904px;top:327px;width:433px;height:1px;background:#e2e2e2"></div>
<div class="a" style="left:904px;top:300px;width:284px;height:26px;background:linear-gradient(#878787 60%,#7a7a7a);border:2px solid #000"></div>
<div class="a" style="left:1188px;top:300px;width:1px;height:26px;background:#f0f0f0"></div>
<div class="dash" style="left:915px;top:310px"></div>
<div class="t" style="left:936px;top:304.00px;font-size:14px;line-height:18px;transform:scaleX(0.913);transform-origin:0 0;color:#2b2b2b">Аналитик</div>
<div class="t" style="left:1197px;top:304.00px;font-size:14px;line-height:18px;transform:scaleX(0.913);transform-origin:0 0;color:#2b2b2b">000000011</div>
<div class="a" style="left:904px;top:328px;width:433px;height:28px;background:#fff;border-top:1px solid #fff;border-bottom:1px solid #fff;border-left:1px solid #fff"></div>
<div class="a" style="left:904px;top:356px;width:433px;height:1px;background:#e2e2e2"></div>
<div class="dash" style="left:915px;top:339px"></div>
<div class="t" style="left:936px;top:333.00px;font-size:14px;line-height:18px;transform:scaleX(0.913);transform-origin:0 0;color:#2b2b2b">Бухгалтер</div>
<div class="t" style="left:1197px;top:333.00px;font-size:14px;line-height:18px;transform:scaleX(0.913);transform-origin:0 0;color:#2b2b2b">000000004</div>
<div class="a" style="left:904px;top:357px;width:433px;height:28px;background:#f8f8f8;border-top:1px solid #fff;border-bottom:1px solid #fff;border-left:1px solid #fff"></div>
<div class="a" style="left:904px;top:385px;width:433px;height:1px;background:#e2e2e2"></div>
<div class="dash" style="left:915px;top:368px"></div>
<div class="t" style="left:936px;top:362.00px;font-size:14px;line-height:18px;transform:scaleX(0.913);transform-origin:0 0;color:#2b2b2b">Зав.Хоз</div>
<div class="t" style="left:1197px;top:362.00px;font-size:14px;line-height:18px;transform:scaleX(0.913);transform-origin:0 0;color:#2b2b2b">000000002</div>
<div class="a" style="left:904px;top:386px;width:433px;height:28px;background:#fff;border-top:1px solid #fff;border-bottom:1px solid #fff;border-left:1px solid #fff"></div>
<div class="a" style="left:904px;top:414px;width:433px;height:1px;background:#e2e2e2"></div>
<div class="dash" style="left:915px;top:397px"></div>
<div class="t" style="left:936px;top:391.00px;font-size:14px;line-height:18px;transform:scaleX(0.913);transform-origin:0 0;color:#2b2b2b">ИТ специалист</div>
<div class="t" style="left:1197px;top:391.00px;font-size:14px;line-height:18px;transform:scaleX(0.913);transform-origin:0 0;color:#2b2b2b">000000010</div>
<div class="a" style="left:904px;top:415px;width:433px;height:28px;background:#f8f8f8;border-top:1px solid #fff;border-bottom:1px solid #fff;border-left:1px solid #fff"></div>
<div class="a" style="left:904px;top:443px;width:433px;height:1px;background:#e2e2e2"></div>
<div class="dash" style="left:915px;top:426px"></div>
<div class="t" style="left:936px;top:420.00px;font-size:14px;line-height:18px;transform:scaleX(0.913);transform-origin:0 0;color:#2b2b2b">Кассир</div>
<div class="t" style="left:1197px;top:420.00px;font-size:14px;line-height:18px;transform:scaleX(0.913);transform-origin:0 0;color:#2b2b2b">000000009</div>
<div class="a" style="left:904px;top:444px;width:433px;height:28px;background:#fff;border-top:1px solid #fff;border-bottom:1px solid #fff;border-left:1px solid #fff"></div>
<div class="a" style="left:904px;top:472px;width:433px;height:1px;background:#e2e2e2"></div>
<div class="dash" style="left:915px;top:455px"></div>
<div class="t" style="left:936px;top:449.00px;font-size:14px;line-height:18px;transform:scaleX(0.913);transform-origin:0 0;color:#2b2b2b">Кладовщик</div>
<div class="t" style="left:1197px;top:449.00px;font-size:14px;line-height:18px;transform:scaleX(0.913);transform-origin:0 0;color:#2b2b2b">000000005</div>
<div class="a" style="left:904px;top:473px;width:433px;height:28px;background:#f8f8f8;border-top:1px solid #fff;border-bottom:1px solid #fff;border-left:1px solid #fff"></div>
<div class="a" style="left:904px;top:501px;width:433px;height:1px;background:#e2e2e2"></div>
<div class="dash" style="left:915px;top:484px"></div>
<div class="t" style="left:936px;top:478.00px;font-size:14px;line-height:18px;transform:scaleX(0.913);transform-origin:0 0;color:#2b2b2b">Программист</div>
<div class="t" style="left:1197px;top:478.00px;font-size:14px;line-height:18px;transform:scaleX(0.913);transform-origin:0 0;color:#2b2b2b">000000008</div>
<div class="a" style="left:904px;top:502px;width:433px;height:28px;background:#fff;border-top:1px solid #fff;border-bottom:1px solid #fff;border-left:1px solid #fff"></div>
<div class="a" style="left:904px;top:530px;width:433px;height:1px;background:#e2e2e2"></div>
<div class="dash" style="left:915px;top:513px"></div>
<div class="t" style="left:936px;top:507.00px;font-size:14px;line-height:18px;transform:scaleX(0.913);transform-origin:0 0;color:#2b2b2b">Программист 1С</div>
<div class="t" style="left:1197px;top:507.00px;font-size:14px;line-height:18px;transform:scaleX(0.913);transform-origin:0 0;color:#2b2b2b">000000003</div>
<div class="a" style="left:904px;top:531px;width:433px;height:28px;background:#f8f8f8;border-top:1px solid #fff;border-bottom:1px solid #fff;border-left:1px solid #fff"></div>
<div class="a" style="left:904px;top:559px;width:433px;height:1px;background:#e2e2e2"></div>
<div class="dash" style="left:915px;top:542px"></div>
<div class="t" style="left:936px;top:536.00px;font-size:14px;line-height:18px;transform:scaleX(0.913);transform-origin:0 0;color:#2b2b2b">Программист Java</div>
<div class="t" style="left:1197px;top:536.00px;font-size:14px;line-height:18px;transform:scaleX(0.913);transform-origin:0 0;color:#2b2b2b">000000007</div>
<div class="a" style="left:904px;top:560px;width:433px;height:28px;background:#fff;border-top:1px solid #fff;border-bottom:1px solid #fff;border-left:1px solid #fff"></div>
<div class="a" style="left:904px;top:588px;width:433px;height:1px;background:#e2e2e2"></div>
<div class="dash" style="left:915px;top:571px"></div>
<div class="t" style="left:936px;top:565.00px;font-size:14px;line-height:18px;transform:scaleX(0.913);transform-origin:0 0;color:#2b2b2b">Системный администратор</div>
<div class="t" style="left:1197px;top:565.00px;font-size:14px;line-height:18px;transform:scaleX(0.913);transform-origin:0 0;color:#2b2b2b">000000001</div>
<div class="a" style="left:904px;top:589px;width:433px;height:28px;background:#f8f8f8;border-top:1px solid #fff;border-bottom:1px solid #fff;border-left:1px solid #fff"></div>
<div class="a" style="left:904px;top:617px;width:433px;height:1px;background:#e2e2e2"></div>
<div class="dash" style="left:915px;top:600px"></div>
<div class="t" style="left:936px;top:594.00px;font-size:14px;line-height:18px;transform:scaleX(0.913);transform-origin:0 0;color:#2b2b2b">Электрик</div>
<div class="t" style="left:1197px;top:594.00px;font-size:14px;line-height:18px;transform:scaleX(0.913);transform-origin:0 0;color:#2b2b2b">000000006</div>
<svg style="left:913px;top:675px" width="5" height="6" viewBox="0 0 5 6"><path d="M4.3 0V6L0 3Z" fill="#c4c4c4"/></svg>
<div class="a" style="left:927px;top:674px;width:272px;height:8px;background:#d6d6d6;border-radius:4px"></div>
<div class="a" style="left:927px;top:674px;width:256px;height:8px;background:#999;border-radius:4px"></div>
<svg style="left:1209px;top:675px" width="4" height="6" viewBox="0 0 4 6"><path d="M0 0V6L4 3Z" fill="#444"/></svg>
<div class="a" style="left:1241px;top:668px;width:97px;height:22px;border:1px solid #a8a8a8;background:#fff"></div>
<div class="a" style="left:1265px;top:668px;width:1px;height:22px;background:#a8a8a8"></div>
<div class="a" style="left:1289px;top:668px;width:1px;height:22px;background:#a8a8a8"></div>
<div class="a" style="left:1313px;top:668px;width:1px;height:22px;background:#a8a8a8"></div>
<svg style="left:1248.5px;top:676px" width="10" height="7" viewBox="0 0 10 7"><path d="M0.5 0.5H9.5" stroke="#a9a9a9" stroke-width="1"/><path d="M5 1.2L9.5 6H0.5Z" fill="#a9a9a9"/></svg>
<svg style="left:1272.5px;top:677px" width="10" height="6" viewBox="0 0 10 6"><path d="M5 0.5L9.5 5.2H0.5Z" fill="#a9a9a9"/></svg>
<svg style="left:1296.5px;top:677px" width="10" height="6" viewBox="0 0 10 6"><path d="M0.5 0.3H9.5L5 5Z" fill="#a9a9a9"/></svg>
<svg style="left:1320.5px;top:677px" width="10" height="7" viewBox="0 0 10 7"><path d="M0.5 0.3H9.5L5 5Z" fill="#a9a9a9"/><path d="M0.5 6H9.5" stroke="#a9a9a9" stroke-width="1"/></svg>
<svg style="left:0px;top:0px" width="1365" height="906" viewBox="0 0 1365 906"><path d="M820.6 389.8 L891.9 343.5 L888.4 337.3 L905.4 340 L899.6 355.9 L896.9 350.5 L822.4 392.4 Q820 392.5 820.6 389.8Z" transform="translate(1.6,2.2)" fill="rgba(60,60,60,0.12)"/><path d="M820.6 389.8 L891.9 343.5 L888.4 337.3 L905.4 340 L899.6 355.9 L896.9 350.5 L822.4 392.4 Q820 392.5 820.6 389.8Z" transform="translate(1,1.4)" fill="rgba(60,60,60,0.22)"/><path d="M820.6 389.8 L891.9 343.5 L888.4 337.3 L905.4 340 L899.6 355.9 L896.9 350.5 L822.4 392.4 Q820 392.5 820.6 389.8Z" fill="#e3392e" stroke="#e3392e" stroke-width="0.6" stroke-linejoin="round"/></svg>
<div class="a" style="left:0;top:0;width:1365px;height:906px;border:1px solid #000;z-index:100"></div>
</body></html>
